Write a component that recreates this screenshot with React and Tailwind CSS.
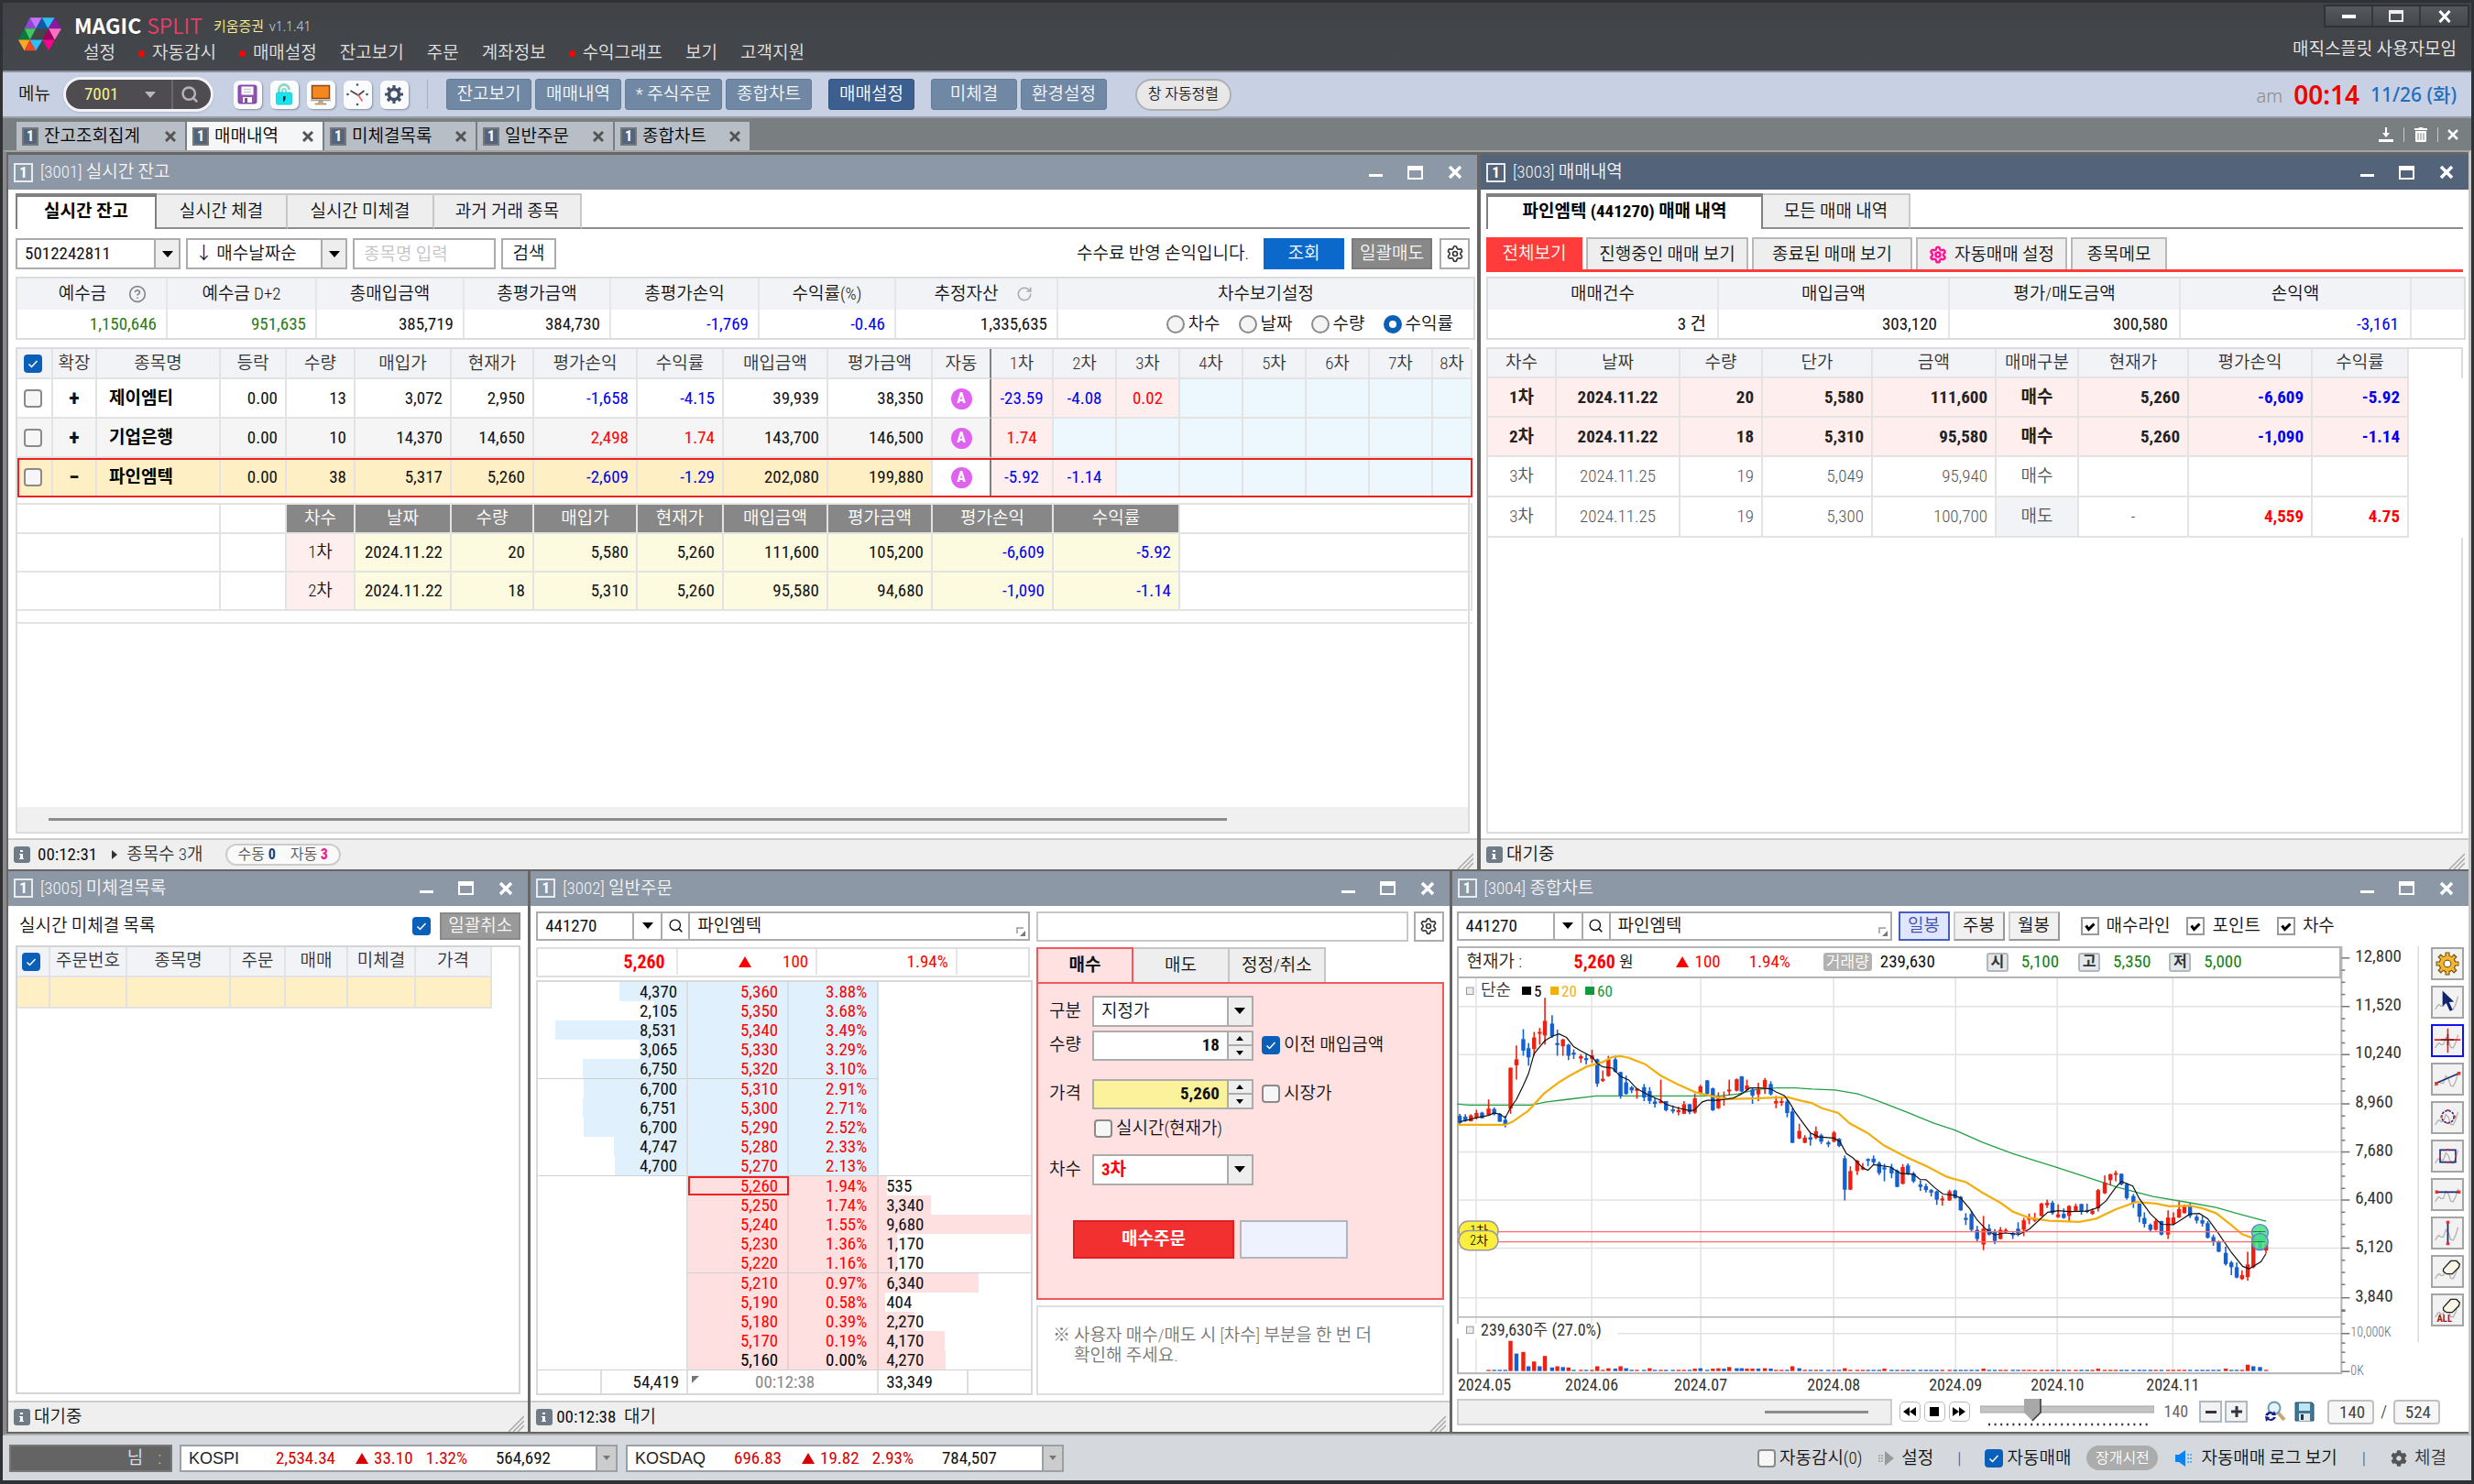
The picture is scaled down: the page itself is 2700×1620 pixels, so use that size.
import React from "react";
import { Settings, Search, RotateCw, CircleHelp } from "lucide-react";
import { FaCog, FaTrashAlt } from "react-icons/fa";

/* ---------- small shared parts ---------- */

function Check({ label, checked, className = "", title }) {
  return (
    <label className={"inline-flex items-center gap-1 whitespace-nowrap " + className}>
      <span className="grid">
        <input
          type="checkbox"
          defaultChecked={checked}
          aria-label={label ? undefined : title}
          className="peer col-start-1 row-start-1 size-5 appearance-none rounded-[4px] border-2 border-[#8a8a8a] bg-[#f6f6f6] checked:border-[#0a5fb8] checked:bg-[#0a5fb8]"
        />
        <svg viewBox="0 0 20 20" className="pointer-events-none col-start-1 row-start-1 hidden size-5 peer-checked:block">
          <path d="M5.5 10.5l3 3 6-6.5" fill="none" stroke="#fff" strokeWidth="1.5" />
        </svg>
      </span>
      {label}
    </label>
  );
}

function BoxCheck({ label }) {
  return (
    <label className="inline-flex items-center gap-2 whitespace-nowrap">
      <span className="grid">
        <input
          type="checkbox"
          defaultChecked
          className="peer col-start-1 row-start-1 size-5 appearance-none border-2 border-[#9a9a9a] bg-white"
        />
        <svg viewBox="0 0 20 20" className="pointer-events-none col-start-1 row-start-1 hidden size-5 peer-checked:block">
          <path d="M5.5 9.5l3 4 6-6" fill="none" stroke="#000" strokeWidth="3" />
        </svg>
      </span>
      {label}
    </label>
  );
}

function Select({ value, label, className = "", textClass = "" }) {
  return (
    <div className={"relative h-[34px] border-2 border-[#acacac] bg-white " + className}>
      <select aria-label={label} className={"h-full w-full appearance-none bg-transparent pr-8 pl-2 " + textClass}>
        <option>{value}</option>
      </select>
      <span className="pointer-events-none absolute inset-y-0 right-0 flex w-[27px] items-center justify-center border-l-2 border-[#acacac] bg-[#eee]">
        <svg viewBox="0 0 12 7" className="h-[7px] w-3"><path d="M0 0h12l-6 7z" fill="#000" /></svg>
      </span>
    </div>
  );
}

function WinButtons() {
  return (
    <div className="flex items-center gap-[27px] pr-4 text-white">
      <button aria-label="최소화" className="flex h-5 w-[15px] items-end pb-[5px]"><span className="block h-[3px] w-full bg-white" /></button>
      <button aria-label="최대화" className="h-[15px] w-[17px] border-2 border-t-[5px] border-white" />
      <button aria-label="닫기">
        <svg viewBox="0 0 16 16" className="size-4"><path d="M2 2l12 12M14 2L2 14" stroke="#fff" strokeWidth="3.5" /></svg>
      </button>
    </div>
  );
}

function Grip() {
  return (
    <svg viewBox="0 0 18 18" className="size-[18px] self-end">
      <path d="M1 18L18 1M6 18L18 6M11 18l7-7" stroke="#a8a8a8" strokeWidth="1.5" />
    </svg>
  );
}

function InfoIcon() {
  return (
    <span className="flex size-[18px] items-center justify-center rounded-[3px] bg-[#6f7c87]">
      <svg viewBox="0 0 6 12" className="h-3 w-1.5"><path d="M1 1h3v2H1zM0 5h4v5h1v1H0v-1h1V6H0z" fill="#fff" /></svg>
    </span>
  );
}

function Win({ code, name, active, status, children }) {
  return (
    <section className="flex min-w-0 flex-col bg-white">
      <header
        className={
          active
            ? "flex h-[38px] items-center justify-between bg-[#52637a] pl-[6px]"
            : "flex h-[38px] items-center justify-between bg-[#8d98a6] pl-[6px]"
        }
      >
        <h2 className="flex items-center gap-2 text-[#f4f6f8]">
          <span className="flex h-[21px] w-[21px] items-center justify-center border-2 border-[#e8ecf0] text-[17px] leading-none font-bold text-white">1</span>
          <span>[{code}] {name}</span>
        </h2>
        <WinButtons />
      </header>
      {children}
      {status && (
        <footer className="flex h-[34px] items-center justify-between border-t-2 border-[#ccc] bg-[#efefef] pr-1 pl-[6px]">
          <div className="flex items-center gap-1">
            <InfoIcon />
            {status}
          </div>
          <Grip />
        </footer>
      )}
    </section>
  );
}

function Cols({ widths }) {
  return (
    <colgroup>
      {widths.map((w, i) => (
        <col key={i} style={{ width: w }} />
      ))}
    </colgroup>
  );
}

const tone = (v) => (String(v).startsWith("-") ? "text-[#0000f0]" : "text-[#ff0000]");
const TH = "border-r-2 border-b-2 border-[#e3e3e6] bg-[#f2f3f7] p-0 font-[350] text-[#333] whitespace-nowrap overflow-hidden";
const TD = "border-r-2 border-b-2 border-[#e3e3e3] p-0 whitespace-nowrap overflow-hidden";

/* ---------- top bars ---------- */

function Logo() {
  const tri = [
    ["80,68 98,32 118,68", "#8f45d6"], ["98,32 138,32 118,68", "#c774fb"], ["118,68 138,32 158,68", "#0c5ba8"],
    ["138,32 180,32 158,68", "#2fc0f2"], ["158,68 180,32 202,68", "#8a18a6"], ["80,68 118,68 98,105", "#3fc85f"],
    ["60,105 80,68 98,105", "#08793f"], ["140,105 160,68 180,105", "#9f0060"], ["160,68 202,68 180,105", "#ff6fc6"],
    ["60,105 98,105 80,141", "#ffa922"], ["80,141 98,105 118,141", "#f04722"], ["98,105 140,105 118,141", "#2fc0fb"],
    ["140,105 180,105 160,141", "#ff0090"],
  ];
  return (
    <svg viewBox="60 32 142 110" className="h-[37px] w-[47px]" aria-hidden="true">
      {tri.map(([p, c]) => (<polygon key={p} points={p} fill={c} />))}
    </svg>
  );
}

const MENU = [
  ["설정"], ["자동감시", 1], ["매매설정", 1], ["잔고보기"], ["주문"], ["계좌정보"], ["수익그래프", 1], ["보기"], ["고객지원"],
];

function TopHeader() {
  return (
    <header className="flex h-[76px] justify-between border-b-2 border-[#8a909b] bg-gradient-to-b from-[#404246] to-[#44474b]">
      <div className="flex pl-[17px]">
        <div className="pt-4"><Logo /></div>
        <div className="pl-[14px]">
          <div className="flex h-[39px] items-center pt-2">
            <span className="font-['Noto_Sans_CJK_KR'] text-[23px] font-bold text-white">MAGIC</span>
            <span className="pl-[6px] font-['Noto_Sans_CJK_KR'] text-[23px] text-[#e83e6b]">SPLIT</span>
            <span className="pt-1 pl-3 text-[15px] text-[#f5f58c]">키움증권</span>
            <span className="pt-1 pl-1.5 font-['Noto_Sans'] text-[14px] text-[#c8d8d8]">v1.1.41</span>
          </div>
          <nav className="flex items-center gap-[25px] pl-[10px] text-[#e2e2e2]">
            {MENU.map(([t, dot]) => (
              <a key={t} href="#" className="flex items-center gap-2 leading-8 whitespace-nowrap">
                {dot && <span className="size-[7px] rounded-full bg-[#ff0000]" />}
                {t}
              </a>
            ))}
          </nav>
        </div>
      </div>
      <div className="flex flex-col items-end">
        <div className="mt-0.5 mr-0.5 flex h-[30px] border-2 border-[#303236] bg-gradient-to-b from-[#55595e] to-[#44474c]">
          <button aria-label="창 최소화" className="flex w-[52px] items-end justify-center border-r-2 border-[#36383c] pb-2"><span className="h-[4px] w-[15px] bg-white" /></button>
          <button aria-label="창 최대화" className="flex w-[52px] items-center justify-center border-r-2 border-[#36383c]"><span className="h-[13px] w-4 border-2 border-t-4 border-[#eee]" /></button>
          <button aria-label="창 닫기" className="flex w-[51px] items-center justify-center"><svg viewBox="0 0 14 14" className="size-[14px]"><path d="M1.5 1l11 12M12.5 1l-11 12" stroke="#fff" strokeWidth="3" /></svg></button>
        </div>
        <a href="#" className="pr-4 leading-[47px] text-[#ececec]">매직스플릿 사용자모임</a>
      </div>
    </header>
  );
}

const IB = "flex h-[31px] w-[31px] items-center justify-center rounded-md bg-[#fafbfd] shadow-[1px_1px_2px_#8890a0]";

function ToolIcons() {
  return (
    <div className="flex gap-[9px]">
      <button aria-label="저장" className={IB}>
        <svg viewBox="0 0 22 22" className="size-[22px]">
          <rect x="1.5" y="1.5" width="19" height="19" rx="2" fill="#9254b4" stroke="#8a48ac" strokeWidth="2" />
          <rect x="4.500" y="2.500" width="13" height="9" fill="#fff" />
          <path d="M7 5.500h8M7 8.500h8" stroke="#c9c9c9" strokeWidth="1.500" />
          <rect x="6" y="14" width="10" height="6" fill="#fff" /><rect x="8" y="15" width="3" height="5" fill="#8a48ac" />
        </svg>
      </button>
      <button aria-label="잠금" className={IB}>
        <svg viewBox="0 0 22 24" className="h-6 w-[22px]">
          <path d="M5.500 11V7a5.500 5.500 0 0 1 11 0" fill="none" stroke="#8fd9c8" strokeWidth="3" />
          <path d="M9 11V8a2 2 0 0 1 4 0v2" fill="none" stroke="#8fd9c8" strokeWidth="2" />
          <rect x="2.500" y="10" width="17" height="13" rx="1.500" fill="#13e6f0" stroke="#32c8d4" />
          <path d="M10 14h2.500v3l-1.500 3h-1z" fill="#123" />
        </svg>
      </button>
      <button aria-label="화면" className={IB}>
        <svg viewBox="0 0 24 24" className="size-6">
          <rect x="2.500" y="2.500" width="19" height="14" fill="#f5871f" stroke="#8a4a1c" strokeWidth="1.500" />
          <path d="M1 18.500h22" stroke="#a9a39a" strokeWidth="1.500" /><path d="M10 19h4v3h4v1H6v-1h4z" fill="#c9b08a" stroke="#9a7a50" strokeWidth=".6" />
        </svg>
      </button>
      <button aria-label="시계" className={IB}>
        <svg viewBox="0 0 26 26" className="size-[26px]">
          <path d="M5.500 9l8.500 5 6.500-5" fill="none" stroke="#444" strokeWidth="1.600" /><path d="M13.500 13l5 7.500" stroke="#f05a5a" strokeWidth="1.500" />
          <g fill="#4a5060"><circle cx="13" cy="2.500" r="1.300" /><circle cx="13" cy="24" r="1.300" /><circle cx="2.500" cy="13" r="1.300" /><circle cx="23.500" cy="13" r="1.300" /></g>
        </svg>
      </button>
      <button aria-label="설정" className={IB}>
        <svg viewBox="0 0 20 20" className="size-5">
          <circle cx="10" cy="10" r="5.500" fill="none" stroke="#44506a" strokeWidth="3.500" />
          <path d="M10 0v4M10 16v4M0 10h4M16 10h4M3 3l3 3M14 14l3 3M17 3l-3 3M6 14l-3 3" stroke="#44506a" strokeWidth="3.200" />
        </svg>
      </button>
    </div>
  );
}

const QB = "h-[34px] rounded-[3px] border border-[#627c98] bg-[#7088a4] text-[#f6f8fa] whitespace-nowrap";

function Toolbar() {
  return (
    <div className="flex h-12 items-center justify-between bg-[#c8d0e3] pr-[16px] pl-[17px]">
      <div className="flex items-center">
        <label htmlFor="screen" className="text-[#111]">메뉴</label>
        <div className="ml-[14px] flex h-[38px] w-[164px] items-center rounded-full border-[3px] border-[#f2f3f6] bg-[#4f4c51] shadow-sm">
          <input id="screen" defaultValue="7001" className="w-[86px] bg-transparent pl-[20px] font-normal text-[#f4f08a]" />
          <svg viewBox="0 0 12 7" className="h-[7px] w-3"><path d="M0 0h12l-6 7z" fill="#b8b8b8" /></svg>
          <button aria-label="찾기" className="ml-[17px] flex h-full items-center border-l-2 border-[#6a686c] pl-[8px]"><Search className="size-5 text-[#b4b4b4]" strokeWidth={3} /></button>
        </div>
        <div className="ml-[22px]"><ToolIcons /></div>
        <span className="mx-5 h-8 w-px bg-[#a4b0c8]" />
        <div className="flex gap-1">
          <button className={QB + " w-[93px]"}>잔고보기</button>
          <button className={QB + " w-[94px]"}>매매내역</button>
          <button className={QB + " w-[106px]"}>* 주식주문</button>
          <button className={QB + " w-[94px]"}>종합차트</button>
        </div>
        <button className="ml-[18px] h-[34px] w-[94px] rounded-[3px] border border-[#34557f] bg-[#3c5f90] text-white">매매설정</button>
        <div className="ml-[18px] flex gap-1">
          <button className={QB + " w-[94px]"}>미체결</button>
          <button className={QB + " w-[94px]"}>환경설정</button>
        </div>
        <button className="ml-[31px] h-[35px] w-[105px] rounded-full border-2 border-[#b0b0b0] bg-[#e8e8e8] text-[16px] text-[#222]">창 자동정렬</button>
      </div>
      <div className="flex items-center font-['Noto_Sans','Noto_Sans_CJK_KR',sans-serif]">
        <span className="pt-1 text-[20px] text-[#8c8c8c]">am</span>
        <span className="px-[12px] text-[28px] font-semibold text-[#f00000]">00:14</span>
        <span className="text-[21px] font-medium text-[#1f6fc0]">11/26 (화)</span>
      </div>
    </div>
  );
}

function PageTabs() {
  const tabs = [["잔고조회집계", "w-[184px]"], ["매매내역", "w-[148px]", 1], ["미체결목록", "w-[165px]"], ["일반주문", "w-[148px]"], ["종합차트", "w-[147px]"]];
  return (
    <div className="flex h-[37px] items-end justify-between border-t-2 border-[#9aa0a8] bg-[#797e80] pl-[15px]">
      <div className="flex gap-0.5">
        {tabs.map(([t, w, on]) => (
          <div key={t} className={"flex h-[31px] items-center pr-2.5 pl-[6px] " + w + (on ? " bg-[#f5f6f8]" : " bg-[#b8bec5]")}>
            <span className="flex h-[20px] w-[18px] items-center justify-center border-2 border-[#777] bg-[#52657d] text-[16px] leading-none font-bold text-white">1</span>
            <a href="#" className="flex-1 pl-[6px] whitespace-nowrap text-black">{t}</a>
            <button aria-label={t + " 닫기"}><svg viewBox="0 0 12 12" className="size-3"><path d="M1 1l10 10M11 1L1 11" stroke="#555" strokeWidth="3" /></svg></button>
          </div>
        ))}
      </div>
      <div className="flex h-full items-center gap-[10px] pr-[14px] text-white">
        <button aria-label="내리기"><svg viewBox="0 0 18 18" className="size-[18px]"><path d="M8 1h2v6h3l-4 5-4-5h3zM1 14h16v3H1z" fill="#fff" /></svg></button>
        <span className="h-4 w-px bg-[#c8c8c8]" />
        <button aria-label="비우기"><FaTrashAlt className="size-4" /></button>
        <span className="h-4 w-px bg-[#c8c8c8]" />
        <button aria-label="닫기"><svg viewBox="0 0 12 12" className="size-3"><path d="M1 1l10 10M11 1L1 11" stroke="#fff" strokeWidth="2.5" /></svg></button>
      </div>
    </div>
  );
}

/* ---------- [3001] balance ---------- */

const T_ON = "h-[39px] border-t-[4px] border-x-2 border-[#808080] bg-white pb-1 font-bold text-black whitespace-nowrap";
const T_OFF = "h-[39px] border-t-2 border-r-2 border-b-2 border-t-[#c8c8c8] border-r-[#c8c8c8] border-b-[#8e8e8e] bg-[#eee] text-[#111] whitespace-nowrap";

const SUM = [
  ["예수금", "1,150,646", "text-[#2a7a1a]"], ["예수금 D+2", "951,635", "text-[#2a7a1a]"], ["총매입금액", "385,719", ""],
  ["총평가금액", "384,730", ""], ["총평가손익", "-1,769", "text-[#0000f0]"], ["수익률(%)", "-0.46", "text-[#0000f0]"], ["추정자산", "1,335,635", ""],
];

const MAIN_W = [39, 48, 135, 72, 75, 105, 90, 113, 94, 114, 114, 64, 68, 69, 69, 69, 69, 69, 69, 43];
const MAIN_H = ["확장", "종목명", "등락", "수량", "매입가", "현재가", "평가손익", "수익률", "매입금액", "평가금액", "자동", "1차", "2차", "3차", "4차", "5차", "6차", "7차", "8차"];
const MAIN_R = [
  { e: "+", n: "제이엠티", v: ["0.00", "13", "3,072", "2,950", "-1,658", "-4.15", "39,939", "38,350"], c: ["-23.59", "-4.08", "0.02"], bg: "bg-white" },
  { e: "+", n: "기업은행", v: ["0.00", "10", "14,370", "14,650", "2,498", "1.74", "143,700", "146,500"], c: ["1.74"], bg: "bg-[#f5f5f5]" },
  { e: "−", n: "파인엠텍", v: ["0.00", "38", "5,317", "5,260", "-2,609", "-1.29", "202,080", "199,880"], c: ["-5.92", "-1.14"], bg: "bg-[#ffefc4]", sel: 1 },
];
const SUB_H = ["차수", "날짜", "수량", "매입가", "현재가", "매입금액", "평가금액"];
const SUB_R = [
  ["1차", "2024.11.22", "20", "5,580", "5,260", "111,600", "105,200", "-6,609", "-5.92"],
  ["2차", "2024.11.22", "18", "5,310", "5,260", "95,580", "94,680", "-1,090", "-1.14"],
];

function BalanceTable() {
  const SH = "h-[32px] border-r-2 border-b-2 border-[#e3e3e3] bg-[#878787] p-0 font-[350] text-white";
  const SY = TD + " h-[42px] bg-[#fcfbe0] pr-2 text-right font-normal";
  return (
    <table className="w-full table-fixed border-separate border-spacing-0">
      <Cols widths={MAIN_W} />
      <thead>
        <tr className="h-[33px]">
          <th className={TH + " pr-1"}><Check checked title="전체 선택" className="align-middle" /></th>
          {MAIN_H.map((h) => (
            <th key={h} className={TH + (h === "자동" ? " !border-r-[#808080]" : "")}>{h}</th>
          ))}
        </tr>
      </thead>
      <tbody>
        {MAIN_R.map((r) => (
          <tr key={r.n} className={"h-[43px] " + r.bg + (r.sel ? " outline-2 -outline-offset-2 outline-[#f02020]" : "")}>
            <td className={TD + " pr-1 text-center"}><Check title={r.n} className="align-middle" /></td>
            <td className={TD + " text-center text-[24px] leading-none font-bold"}>{r.e}</td>
            <td className={TD + " pl-[13px] font-bold text-black"}>{r.n}</td>
            {r.v.map((v, i) => (
              <td key={i} className={TD + " pr-2 text-right font-normal " + (i === 4 || i === 5 ? tone(v) : "text-[#111]")}>{v}</td>
            ))}
            <td className={TD + " !border-r-[#808080] text-center " + (r.sel ? "bg-white" : "")}>
              <span className="inline-flex size-[23px] items-center justify-center rounded-full bg-[#df63f0] align-middle text-[16px] leading-none font-bold text-white">A</span>
            </td>
            {[0, 1, 2, 3, 4, 5, 6, 7].map((i) => (
              <td key={i} className={TD + " text-center font-normal " + (r.c[i] ? "bg-[#ffeeee] " + tone(r.c[i]) : "bg-[#edf7fe]")}>{r.c[i]}</td>
            ))}
          </tr>
        ))}
        <tr className="h-[8px]"><td colSpan={20} className="border-b-2 border-[#e3e3e3] p-0" /></tr>
        <tr>
          <td colSpan={3} className={TD} />
          <td className={TD} />
          {SUB_H.map((h) => (<th key={h} className={SH}>{h}</th>))}
          <th colSpan={2} className={SH}>평가손익</th>
          <th colSpan={2} className={SH}>수익률</th>
          <td colSpan={5} className={TD} />
        </tr>
        {SUB_R.map((r) => (
          <tr key={r[0]}>
            <td colSpan={3} className={TD} />
            <td className={TD} />
            <td className={TD + " bg-[#ffeeee] text-center"}>{r[0]}</td>
            {r.slice(1, 7).map((v, i) => (<td key={i} className={SY}>{v}</td>))}
            <td colSpan={2} className={SY + " text-[#0000f0]"}>{r[7]}</td>
            <td colSpan={2} className={SY + " text-[#0000f0]"}>{r[8]}</td>
            <td colSpan={5} className={TD} />
          </tr>
        ))}
        <tr className="h-[14px]"><td colSpan={20} className="border-b-2 border-[#e3e3e3] p-0" /></tr>
      </tbody>
    </table>
  );
}

function BalanceWindow() {
  return (
    <Win
      code="3001"
      name="실시간 잔고"
      status={
        <>
          <span className="pl-1 font-normal">00:12:31</span>
          <svg viewBox="0 0 6 10" className="mr-1.5 ml-3 h-2.5 w-1.5"><path d="M0 0l6 5-6 5z" fill="#333" /></svg>
          <span className="text-[#333]">종목수 3개</span>
          <span className="ml-5 flex h-6 items-center gap-4 rounded-full border-2 border-[#ccc] bg-[#fafafa] px-3 text-[16px] text-[#555]">
            <span>수동 <b className="text-[#1c3f6e]">0</b></span>
            <span>자동 <b className="text-[#f0148c]">3</b></span>
          </span>
        </>
      }
    >
      <div className="flex flex-1 flex-col px-2 pt-1 pb-[5px]">
        <div className="flex">
          <button className={T_ON + " w-[154px]"}>실시간 잔고</button>
          <button className={T_OFF + " w-[143px]"}>실시간 체결</button>
          <button className={T_OFF + " w-[160px]"}>실시간 미체결</button>
          <button className={T_OFF + " w-[161px]"}>과거 거래 종목</button>
          <span className="flex-1 border-b-2 border-[#8e8e8e]" />
        </div>
        <div className="mt-[10px] flex items-center justify-between">
          <div className="flex gap-[6px]">
            <Select value="5012242811" label="계좌번호" className="w-[180px]" textClass="font-normal" />
            <Select value="↓ 매수날짜순" label="정렬" className="w-[176px]" />
            <input aria-label="종목명" placeholder="종목명 입력" className="h-[34px] w-[156px] border-2 border-[#acacac] px-2.5 placeholder:text-[#c4c4c4]" />
            <button className="h-[34px] w-[60px] border-2 border-[#acacac] bg-white">검색</button>
          </div>
          <div className="flex items-center gap-2">
            <span className="pr-2">수수료 반영 손익입니다.</span>
            <button className="h-[34px] w-[88px] bg-[#0c69cc] text-white">조회</button>
            <button className="h-[34px] w-[88px] border-2 border-[#7a7a7a] bg-[#888] text-[#f8f8f8]">일괄매도</button>
            <button aria-label="잔고 설정" className="flex h-[34px] w-[33px] items-center justify-center border-2 border-[#acacac]"><Settings className="size-5 text-[#333]" /></button>
          </div>
        </div>
        <table className="mt-[8px] w-full table-fixed border-separate border-spacing-0 border-2 border-[#dcdcdc]">
          <Cols widths={[164, 163, 161, 160, 162, 149, 177, 453]} />
          <thead>
            <tr className="h-[34px]">
              {SUM.map(([h]) => (
                <th key={h} className="border-r-2 border-[#e6e6ea] bg-[#f2f3f7] p-0 font-[350] whitespace-nowrap">
                  <span className="inline-flex items-center">
                    {h}
                    {h === "예수금" && <CircleHelp className="-mr-6 ml-6 size-5 text-[#888]" />}
                    {h === "추정자산" && <RotateCw className="-mr-4 ml-5 size-[18px] text-[#aaa]" />}
                  </span>
                </th>
              ))}
              <th className="bg-[#f2f3f7] p-0 font-[350]">차수보기설정</th>
            </tr>
          </thead>
          <tbody>
            <tr className="h-[31px]">
              {SUM.map(([h, v, c]) => (<td key={h} className={"border-r-2 border-[#e6e6ea] p-0 pr-2.5 text-right font-normal " + c}>{v}</td>))}
              <td className="p-0">
                <div className="flex justify-end gap-5 pr-[22px]">
                  {["차수", "날짜", "수량", "수익률"].map((t) => (
                    <label key={t} className="flex items-center gap-1">
                      <input type="radio" name="view" defaultChecked={t === "수익률"} className="size-5 appearance-none rounded-full border-2 border-[#8a8a8a] bg-[#f4f4f4] checked:border-[6px] checked:border-[#0a5fb8] checked:bg-white" />
                      {t}
                    </label>
                  ))}
                </div>
              </td>
            </tr>
          </tbody>
        </table>
        <div className="mt-[8px] flex flex-1 flex-col border-2 border-[#dcdcdc]">
          <BalanceTable />
          <div className="mt-auto flex h-[27px] items-center bg-[#f0f0f0] pl-[34px]"><span className="h-[3px] w-[83%] bg-[#8c8c8c]" /></div>
        </div>
      </div>
    </Win>
  );
}

/* ---------- [3003] trade history ---------- */

const HIS_W = [75, 135, 90, 120, 135, 90, 120, 135, 105, 59];
const HIS_H = ["차수", "날짜", "수량", "단가", "금액", "매매구분", "현재가", "평가손익", "수익률"];
const HIS_R = [
  ["1차", "2024.11.22", "20", "5,580", "111,600", "매수", "5,260", "-6,609", "-5.92"],
  ["2차", "2024.11.22", "18", "5,310", "95,580", "매수", "5,260", "-1,090", "-1.14"],
  ["3차", "2024.11.25", "19", "5,049", "95,940", "매수", "", "", ""],
  ["3차", "2024.11.25", "19", "5,300", "100,700", "매도", "-", "4,559", "4.75"],
];

function HistoryWindow() {
  const HB = "h-[35px] border-2 border-b-0 border-[#b8b8b8] bg-[#eee] text-[#111] whitespace-nowrap";
  return (
    <Win code="3003" name="매매내역" active status={<span>대기중</span>}>
      <div className="flex flex-1 flex-col px-[6px] pt-1 pb-[5px]">
        <div className="flex">
          <button className={T_ON + " w-[302px]"}>파인엠텍 (441270) 매매 내역</button>
          <button className={T_OFF + " w-[161px]"}>모든 매매 내역</button>
          <span className="flex-1 border-b-2 border-[#8e8e8e]" />
        </div>
        <div className="mt-[9px] flex gap-1 border-b-[3px] border-[#ff3b3b]">
          <button className="h-[35px] w-[105px] bg-[#ff3b3b] text-white">전체보기</button>
          <button className={HB + " w-[177px]"}>진행중인 매매 보기</button>
          <button className={HB + " w-[175px]"}>종료된 매매 보기</button>
          <button className={HB + " flex w-[165px] items-center justify-center gap-2"}><Settings className="size-5 text-[#ff1493]" strokeWidth={3} />자동매매 설정</button>
          <button className={HB + " w-[105px]"}>종목메모</button>
        </div>
        <table className="mt-[5px] w-full table-fixed border-separate border-spacing-0 border-2 border-[#dcdcdc]">
          <Cols widths={[252, 252, 252, 252, 57]} />
          <thead>
            <tr className="h-[34px]">
              {["매매건수", "매입금액", "평가/매도금액", "손익액", ""].map((h) => (<th key={h} className="border-r-2 border-[#e6e6ea] bg-[#f2f3f7] p-0 font-[350] last:border-r-0">{h}</th>))}
            </tr>
          </thead>
          <tbody>
            <tr className="h-[31px]">
              {["3 건", "303,120", "300,580", "-3,161", ""].map((v) => (<td key={v} className={"border-r-2 border-[#e6e6ea] p-0 pr-3 text-right font-normal last:border-r-0 " + (v[0] === "-" ? "text-[#0000f0]" : "")}>{v}</td>))}
            </tr>
          </tbody>
        </table>
        <div className="mt-[8px] flex-1 border-2 border-[#dcdcdc]">
          <table className="w-full table-fixed border-separate border-spacing-0">
            <Cols widths={HIS_W} />
            <thead>
              <tr className="h-[32px]">
                {HIS_H.map((h) => (<th key={h} className={TH}>{h}</th>))}
                <td />
              </tr>
            </thead>
            <tbody>
              {HIS_R.map((r, k) => (
                <tr key={k} className={k < 2 ? "h-[43px] bg-[#ffeeee] font-bold text-[#222]" : "h-[44px] font-[350] text-[#555]"}>
                  {r.map((v, i) => {
                    const mid = i < 2 || i === 5 || v === "-";
                    return (
                      <td key={i} className={TD + (mid ? " text-center" : " pr-2 text-right") + (i > 6 ? " font-bold " + tone(v) : "") + (v === "매도" ? " bg-[#f2f3f7]" : "")}>{v}</td>
                    );
                  })}
                  <td className="bg-white" />
                </tr>
              ))}
            </tbody>
          </table>
        </div>
      </div>
    </Win>
  );
}

/* ---------- [3005] open orders ---------- */

function OpenOrdersWindow() {
  return (
    <Win code="3005" name="미체결목록" status={<span>대기중</span>}>
      <div className="flex flex-1 flex-col px-2 pt-[7px] pb-[7px]">
        <div className="flex items-center justify-between pl-1">
          <span>실시간 미체결 목록</span>
          <div className="flex items-center gap-[10px]">
            <Check checked title="실시간" />
            <button className="h-[30px] w-[88px] border-2 border-[#8a8a8a] bg-[#9a9a9a] text-[#f8f8f8]">일괄취소</button>
          </div>
        </div>
        <div className="mt-[6px] flex-1 border-2 border-[#d4d4d4]">
          <table className="w-full table-fixed border-separate border-spacing-0">
            <Cols widths={[36, 84, 113, 60, 68, 74, 83, 33]} />
            <thead>
              <tr className="h-[33px]">
                <th className={TH + " pr-1"}><Check checked title="전체 선택" className="align-middle" /></th>
                {["주문번호", "종목명", "주문", "매매", "미체결", "가격"].map((h) => (<th key={h} className={TH}>{h}</th>))}
                <td />
              </tr>
            </thead>
            <tbody>
              <tr className="h-[34px]">
                {[0, 1, 2, 3, 4, 5, 6].map((i) => (<td key={i} className={TD + " bg-[#ffefc4]"} />))}
                <td />
              </tr>
            </tbody>
          </table>
        </div>
      </div>
    </Win>
  );
}

/* ---------- [3002] order ---------- */

function SymbolBox({ box = "" }) {
  return (
    <div className={"flex h-[32px] border-2 border-[#acacac] bg-white " + box}>
      <input aria-label="종목코드" defaultValue="441270" className="w-[103px] min-w-0 px-2 font-normal" />
      <button aria-label="종목 목록" className="flex w-[31px] items-center justify-center border-l-2 border-[#acacac]"><svg viewBox="0 0 12 7" className="h-[7px] w-3"><path d="M0 0h12l-6 7z" fill="#000" /></svg></button>
      <button aria-label="종목 찾기" className="flex w-[32px] items-center justify-center border-x-2 border-[#acacac]"><Search className="size-[17px]" /></button>
      <span className="flex flex-1 items-center justify-between pr-[3px] pl-2">
        파인엠텍
        <svg viewBox="0 0 10 10" className="mb-[3px] size-2.5 self-end"><path d="M1 7V1h7" fill="none" stroke="#999" strokeWidth="1.5" /><path d="M10 4v6H4z" fill="#777" /></svg>
      </span>
    </div>
  );
}

const ASKS = [
  ["4,370", "5,360", "3.88%"], ["2,105", "5,350", "3.68%"], ["8,531", "5,340", "3.49%"], ["3,065", "5,330", "3.29%"], ["6,750", "5,320", "3.10%"],
  ["6,700", "5,310", "2.91%"], ["6,751", "5,300", "2.71%"], ["6,700", "5,290", "2.52%"], ["4,747", "5,280", "2.33%"], ["4,700", "5,270", "2.13%"],
];
const BIDS = [
  ["535", "5,260", "1.94%"], ["3,340", "5,250", "1.74%"], ["9,680", "5,240", "1.55%"], ["1,170", "5,230", "1.36%"], ["1,170", "5,220", "1.16%"],
  ["6,340", "5,210", "0.97%"], ["404", "5,190", "0.58%"], ["2,270", "5,180", "0.39%"], ["4,170", "5,170", "0.19%"], ["4,270", "5,160", "0.00%"],
];
const share = (q) => (Number(q.replace(",", "")) / 9680) * 100 + "%";

function OrderBook() {
  const line = (i) => (i % 5 === 4 ? " border-b border-b-[#d0d0d0]" : "");
  const h = (i) => (i % 5 === 4 ? " h-[22px]" : " h-[21px]");
  return (
    <table className="mt-[3px] w-full table-fixed border-separate border-spacing-0 border-2 border-[#d8d8d8] leading-[21px] font-normal">
      <Cols widths={[70, 94, 110, 98, 98, 68]} />
      <tbody>
        {ASKS.map(([q, p, r], i) => (
          <tr key={p}>
            <td colSpan={2} className={"border-r-2 border-[#dedede] p-0" + h(i) + line(i)}>
              <div className="grid h-5 grid-cols-1">
                <span className="col-start-1 row-start-1 justify-self-end bg-[#e0f1fd]" style={{ width: share(q) }} />
                <span className="col-start-1 row-start-1 pr-[10px] text-right">{q}</span>
              </div>
            </td>
            <td className={"border-r-2 border-[#d4e0e8] bg-[#e0f1fd] p-0 pr-[10px] text-right text-[#ff0000]" + line(i)}>{p}</td>
            <td className={"border-r-2 border-[#d4e0e8] bg-[#e0f1fd] p-0 pr-[11px] text-right text-[#ff0000]" + line(i)}>{r}</td>
            <td colSpan={2} className={"p-0" + (i === 9 ? line(i) : "")} />
          </tr>
        ))}
        {BIDS.map(([q, p, r], i) => (
          <tr key={p}>
            <td colSpan={2} className={"border-r-2 border-[#dedede] p-0" + h(i) + (i === 9 ? line(i) : "")} />
            <td className={"border-r-2 border-[#ecd0d0] bg-[#ffe0e0] p-0 pr-[10px] text-right" + (i === 9 ? " text-black" : " text-[#ff0000]") + (i === 0 ? " outline-2 -outline-offset-2 outline-[#f02020]" : "") + line(i)}>{p}</td>
            <td className={"border-r-2 border-[#ecd0d0] bg-[#ffe0e0] p-0 pr-[11px] text-right" + (i === 9 ? " text-black" : " text-[#ff0000]") + line(i)}>{r}</td>
            <td colSpan={2} className={"p-0" + line(i)}>
              <div className="grid h-5 grid-cols-1">
                <span className="col-start-1 row-start-1 bg-[#ffe0e0]" style={{ width: share(q) }} />
                <span className="col-start-1 row-start-1 pl-2">{q}</span>
              </div>
            </td>
          </tr>
        ))}
        <tr className="h-[25px]">
          <td className="border-r-2 border-[#dedede] p-0" />
          <td className="border-r-2 border-[#dedede] p-0 pr-2 text-right">54,419</td>
          <td colSpan={2} className="border-r-2 border-[#dedede] p-0">
            <div className="flex justify-between pr-[68px] pl-1 text-[#888]">
              <svg viewBox="0 0 8 8" className="mt-1 size-2"><path d="M0 0h8L0 8z" fill="#777" /></svg>
              00:12:38
            </div>
          </td>
          <td className="border-r-2 border-[#dedede] p-0 pl-2">33,349</td>
          <td className="p-0" />
        </tr>
      </tbody>
    </table>
  );
}

function Spin({ value, label, field = "bg-white" }) {
  return (
    <div className="flex h-[33px] w-[176px] border-2 border-[#acacac]">
      <input aria-label={label} defaultValue={value} className={"w-full min-w-0 flex-1 pr-2 text-right font-bold " + field} />
      <span className="flex w-[27px] flex-col border-l-2 border-[#acacac] bg-[#eee]">
        <button type="button" aria-label={label + " 증가"} className="flex flex-1 items-center justify-center border-b-2 border-[#acacac]"><svg viewBox="0 0 8 5" className="h-[5px] w-2"><path d="M0 5h8L4 0z" /></svg></button>
        <button type="button" aria-label={label + " 감소"} className="flex flex-1 items-center justify-center"><svg viewBox="0 0 8 5" className="h-[5px] w-2"><path d="M0 0h8L4 5z" /></svg></button>
      </span>
    </div>
  );
}

function OrderForm() {
  const OFF = "h-[38px] w-[105px] border-t-2 border-r-2 border-[#c6c6c6] bg-[#eee]";
  const ROW = "flex items-center gap-[9px]";
  const LAB = "w-[38px]";
  return (
    <div className="flex min-w-0 flex-1 flex-col">
      <div className="flex gap-[6px]">
        <input aria-label="메시지" className="h-[33px] min-w-0 flex-1 border-2 border-[#c8c8c8] px-2" />
        <button aria-label="주문 설정" className="flex h-[33px] w-[33px] items-center justify-center border-2 border-[#acacac]"><Settings className="size-5 text-[#333]" /></button>
      </div>
      <div className="mt-[6px] flex">
        <button className="h-[38px] w-[106px] border-2 border-b-0 border-[#f05a5a] bg-[#ffe1e1] font-bold">매수</button>
        <button className={OFF}>매도</button>
        <button className={OFF}>정정/취소</button>
      </div>
      <form className="flex flex-col border-2 border-[#f05a5a] bg-[#ffe1e1] px-3 pt-[13px] pb-[43px]">
        <div className={ROW}><span className={LAB}>구분</span><Select value="지정가" label="구분" className="w-[176px]" /></div>
        <div className={ROW + " mt-1"}><span className={LAB}>수량</span><Spin value="18" label="수량" /><Check checked label="이전 매입금액" /></div>
        <div className={ROW + " mt-[20px]"}><span className={LAB}>가격</span><Spin value="5,260" label="가격" field="bg-[#fdf29c]" /><Check label="시장가" /></div>
        <Check label="실시간(현재가)" className="mt-[9px] ml-[49px]" />
        <div className={ROW + " mt-[16px]"}><span className={LAB}>차수</span><Select value="3차" label="차수" className="w-[176px]" textClass="font-bold text-[#ff0000]" /></div>
        <div className="mt-[38px] flex gap-[6px] pl-[26px]">
          <button type="button" className="h-[42px] w-[176px] border-2 border-[#e02020] bg-[#f23030] font-bold text-white">매수주문</button>
          <button type="button" aria-label="예비" className="h-[42px] w-[118px] border-2 border-[#b4b4bc] bg-[#eef2ff]" />
        </div>
      </form>
      <div className="mt-[6px] flex flex-1 gap-1 border-2 border-[#dedede] px-4 pt-[20px] leading-[22px] text-[#777]">
        <span>※</span>
        <p>사용자 매수/매도 시 [차수] 부분을 한 번 더<br />확인해 주세요.</p>
      </div>
    </div>
  );
}

function OrderWindow() {
  return (
    <Win code="3002" name="일반주문" status={<span className="font-normal">00:12:38&nbsp; <span className="font-[350]">대기</span></span>}>
      <div className="flex flex-1 gap-[7px] px-[6px] pt-[6px] pb-[6px]">
        <div className="w-[54.4%] shrink-0">
          <SymbolBox />
          <div className="mt-[7px] grid h-[33px] grid-cols-[154fr_154fr_154fr_78fr] items-center border-2 border-[#dedede] font-normal text-[#ff0000]">
            <b className="border-r-2 border-[#e6e6e6] pr-3 text-right text-[20px] leading-7">5,260</b>
            <span className="flex items-center justify-between border-r-2 border-[#e6e6e6] pr-2 pl-[66px] leading-7"><svg viewBox="0 0 14 12" className="h-3 w-3.5"><path d="M7 0l7 12H0z" fill="#ff0000" /></svg>100</span>
            <span className="border-r-2 border-[#e6e6e6] pr-2 text-right leading-7">1.94%</span>
            <span />
          </div>
          <OrderBook />
        </div>
        <OrderForm />
      </div>
    </Win>
  );
}

/* ---------- [3004] chart ---------- */

const R = 1;
const B = 0;
const C1 = [
  [34,636,641,659,662,B],[51,637,643,654,656,B],[68,637,640,655,655,R],[85,626,634,645,650,R],[102,631,633,647,648,B],[122,600,623,639,640,R],
  [139,620,624,637,640,B],[156,634,636,656,656,B],[173,641,651,664,670,B],[189,520,520,623,636,R],[207,464,499,514,550,R],[228,423,448,477,490,B],
  [244,458,471,494,515,B],[261,430,444,473,490,R],[278,420,430,434,462,R],[294,344,402,439,462,R],[316,388,409,441,445,B],[332,424,458,463,490,B],
  [349,447,449,466,490,R],[366,460,462,490,501,B],[382,474,482,487,498,B],[404,486,491,497,508,R],[420,486,496,501,512,B],[438,475,489,498,508,R],
  [454,497,499,560,568,B],[471,527,548,553,556,R],[488,490,499,541,543,R],[509,490,499,530,532,B],[525,530,531,591,598,B],[542,540,557,586,588,B],
  [559,566,569,577,584,B],[575,571,573,578,598,R],[597,561,569,595,604,B],[614,569,579,604,611,B],[630,596,605,611,620,B],[648,550,604,609,610,R],
  [664,604,604,627,630,B],[685,615,625,630,635,B],[702,618,627,632,640,R],[719,604,612,636,637,R],[736,611,612,632,637,B],[752,585,597,633,636,R],
  [769,563,567,584,588,R],[790,551,552,586,590,B],[807,570,572,627,629,B],[824,582,597,622,624,R],[841,580,594,600,616,R],[857,550,575,579,590,R],
  [880,547,549,578,580,R],[895,541,542,580,582,B],[911,550,565,575,580,R],[928,572,575,590,611,B],[946,558,575,587,604,R],[966,546,551,570,586,R],
  [984,554,561,587,590,B],[1000,591,604,610,622,R],[1017,593,604,608,616,R],[1034,599,605,634,645,B],[1050,622,630,709,710,B],[1071,661,679,698,700,R],
  [1088,690,696,709,710,R],[1105,684,695,701,716,B],[1122,668,680,697,700,R],[1138,686,690,706,712,B],[1160,704,708,713,720,B],[1177,679,683,706,708,R],
  [1193,697,699,717,720,B],[1210,741,748,827,854,B],[1227,768,780,827,828,R],[1248,752,754,780,790,R],[1265,760,771,776,778,R],[1281,748,750,754,768,B],
  [1298,741,749,758,764,B],[1315,756,760,785,790,B],[1331,762,771,776,806,B],[1353,762,771,786,798,B],[1370,776,779,820,821,B],[1387,763,770,812,814,R],
  [1403,761,766,787,790,B],[1420,782,786,806,810,B],[1441,803,814,820,830,B],[1458,812,818,828,834,B],[1474,825,828,834,844,B],[1491,829,831,852,865,B],
  [1508,842,849,854,867,R],[1530,827,831,854,855,R],[1547,827,829,848,850,B],[1564,843,845,879,880,B],
];
const C2 = [
  [39,886,898,903,916,B],[56,880,888,928,932,B],[73,918,928,951,957,B],[92,893,925,965,979,R],[109,914,925,940,942,B],[126,926,933,956,964,B],
  [143,921,928,951,952,R],[159,924,928,934,936,R],[180,932,937,941,951,B],[196,909,925,936,944,B],[213,898,904,928,944,R],[229,887,898,902,914,R],
  [246,885,900,905,908,R],[266,860,862,893,894,R],[283,852,860,866,873,R],[299,855,860,886,890,B],[316,864,889,896,898,R],[333,874,888,898,900,B],
  [349,866,868,893,906,R],[369,862,868,880,882,R],[386,862,863,881,890,B],[403,862,878,882,886,B],[419,874,880,888,890,R],[436,825,828,874,882,R],
  [456,791,809,836,838,R],[473,787,788,803,816,R],[489,779,785,788,806,R],[506,786,787,814,816,B],[522,810,813,848,852,B],[542,838,843,860,873,B],
  [560,862,862,895,909,B],[575,884,898,913,922,B],[593,912,915,928,932,B],[609,900,906,928,930,R],[626,905,906,940,942,B],[646,879,897,940,951,R],
  [662,884,897,913,916,R],[679,857,876,897,898,R],[695,864,868,886,887,R],[712,862,866,893,898,B],[732,890,895,905,912,B],[749,893,904,912,920,B],
  [765,906,911,948,950,B],[782,940,946,957,968,B],[798,955,957,983,984,B],[819,970,986,1014,1018,B],[836,1006,1010,1022,1042,B],[852,1010,1022,1048,1050,B],
  [868,1030,1042,1052,1054,R],[885,983,1015,1047,1056,R],[902,940,945,1022,1025,R],[922,930,950,978,980,B],[940,960,965,980,987,R],
];
const VOL1 = { 189: [76, R], 207: [44, B], 228: [48, R], 244: [12, B], 261: [24, R], 278: [12, B], 294: [38, R], 316: [9, B], 332: [12, R], 349: [10, B], 366: [9, R], 454: [12, R], 488: [7, R], 509: [6, B], 525: [12, R], 542: [7, B], 614: [7, R], 752: [6, R], 769: [7, B], 807: [6, R], 824: [7, R], 841: [6, B], 857: [10, R], 880: [7, B], 895: [7, B], 911: [6, R], 928: [6, R], 946: [6, B], 966: [7, R], 984: [6, B], 1050: [12, R], 1071: [7, B], 1210: [7, R], 1331: [6, R] };
const VOL2 = { 92: [6, R], 436: [6, R], 819: [6, R], 885: [16, R], 902: [12, B], 922: [10, B] };
const M5 = [
  "34,656 51,653 85,646 122,640 139,634 156,637 173,646 189,620 207,600 228,565 244,535 261,485 278,468 294,452 316,441 337,435 360,444 382,467 404,478 438,493 454,509 471,518 500,521 525,542 550,551 575,573 614,590 648,602 664,612 702,622 736,628 750,627 775,606 790,602 824,602 841,600 870,596 895,586 920,571 950,571 984,573 1000,581 1025,590 1040,606 1060,634 1080,656 1105,684 1130,694 1177,697 1195,706 1215,736 1235,747 1265,772 1281,778 1298,764 1350,770 1380,786 1420,788 1440,801 1458,802 1485,822 1510,838 1547,841",
  "6,842 23,848 50,874 73,903 100,927 126,941 155,936 200,939 230,926 266,898 285,884 316,880 349,882 403,881 436,872 460,855 489,821 506,806 540,818 560,850 593,888 626,914 662,915 690,900 712,888 740,887 765,900 798,938 836,985 870,1020 890,1026 925,1008 940,988",
];
const M20 = [
  "26,664 173,664 195,656 244,628 290,586 338,556 370,540 420,518 470,506 500,493 525,491 550,495 600,511 648,540 700,562 752,581 800,591 850,599 950,597 1034,594 1080,604 1110,609 1140,622 1190,634 1225,660 1281,685 1330,716 1400,746 1460,768 1520,794",
  "0,799 40,808 90,835 143,860 180,882 230,898 290,905 380,908 430,900 490,876 550,858 610,862 650,869 712,867 750,874 790,886 836,916 868,939 900,949",
];
const M60 = [
  "26,611 60,614 250,614 300,606 360,600 450,591 740,591 830,591 885,586 940,575 1000,571 1060,571 1110,574 1180,576 1250,586 1310,603 1400,632 1480,659",
  "6,677 90,708 180,736 316,772 430,803 490,820 600,844 712,860 790,872 850,886 940,906",
];

const xa = (x) => x / 2.8 - 9;
const xb = (x) => x / 2.751 + 541;
const yy = (y) => y / 2.306 - 93;
const path = ([a, b]) => {
  const conv = (s, fx) => s.split(" ").map((p) => { const [x, y] = p.split(","); return fx(+x).toFixed(1) + "," + yy(+y).toFixed(1); });
  return [...conv(a, xa), ...conv(b, xb)].join(" ");
};
const CANDLES = [...C1.map(([x, ...r]) => [xa(x), ...r, VOL1[x] || [x < 120 ? 0 : 3, r[4]]]), ...C2.map(([x, ...r]) => [xb(x), ...r, VOL2[x] || [3, r[4]]])];
const HUE = ["#1560d0", "#f02010"];
const LEVELS = [[244, "12,800"], [366, "11,520"], [487, "10,240"], [611, "8,960"], [732, "7,680"], [853, "6,400"], [974, "5,120"], [1099, "3,840"]];
const MONTHS = [[21, "2024.05"], [147, "2024.06"], [266, "2024.07"], [411, "2024.08"], [544, "2024.09"], [655, "2024.10"], [781, "2024.11"]];

function ChartDrawing() {
  return (
    <svg viewBox="0 0 1050 492" className="col-start-1 row-start-1 h-auto w-full" role="img" aria-label="파인엠텍 일봉 차트">
      <g stroke="#e2e2e2" strokeWidth="1.5">
        {LEVELS.slice(1).map(([y]) => (<path key={y} d={`M0 ${yy(y)}H965`} />))}
        {MONTHS.map(([x]) => (<path key={x} d={`M${x} 34V466`} />))}
        <path d="M175 422.6H965" />
      </g>
      <rect x="1" y="1" width="964" height="465" fill="none" stroke="#b4b4b4" strokeWidth="2" />
      <path d="M0 404.5H965" stroke="#b4b4b4" strokeWidth="1.5" />
      <g stroke="#777" strokeWidth="1.5">
        {LEVELS.map(([y]) => (<path key={y} d={`M965 ${yy(y)}h9`} />))}
        {LEVELS.flatMap(([y], i) => [1, 2, 3].map((k) => <path key={y + "-" + k} d={`M965 ${Math.min(yy(y) + k * 13.25, 398)}h4`} />))}
        {[412, 422.6, 433, 443, 454, 464].map((y, i) => (<path key={y} d={`M965 ${y}h${i === 1 || i === 5 ? 9 : 4}`} />))}
      </g>
      <path d="M1049 0V432" stroke="#ddd" strokeWidth="2" />
      <polyline points={path(M60)} fill="none" stroke="#22a045" strokeWidth="1.3" />
      {CANDLES.map(([x, h, t, b, l, c, v]) => (
        <g key={x} fill={HUE[c]}>
          <rect x={x - 0.8} y={yy(h)} width="1.6" height={(l - h) / 2.306} />
          <rect x={x - 2.2} y={yy(t)} width="4.4" height={Math.max((b - t) / 2.306, 2)} />
          {v[0] > 0 && <rect x={x - 2.2} y={463.5 - v[0] / 2.306} width="4.4" height={v[0] / 2.306} fill={HUE[v[1]]} />}
        </g>
      ))}
      <polyline points={path(M20)} fill="none" stroke="#f2b010" strokeWidth="2.3" />
      <polyline points={path(M5)} fill="none" stroke="#111" strokeWidth="1.2" />
      <path d="M0 311.5H876M0 322.5H876" stroke="#ff6a6a" strokeWidth="1.3" />
      <g fill="#45e080" fillOpacity=".85" stroke="#5a78e8" strokeWidth="1.3">
        <circle cx="876" cy="312.5" r="9" /><circle cx="876" cy="322.5" r="9" />
      </g>
      <path d="M868 311.5h14M868 322.5h14" stroke="#208040" strokeWidth="1" />
      <g fontSize="14" textAnchor="middle">
        <rect x="2" y="300" width="43" height="21" rx="10.5" fill="#fbee3c" stroke="#9a9a9a" strokeWidth="1.5" />
        <text x="24" y="315">1차</text>
        <rect x="2" y="310.5" width="43" height="21" rx="10.5" fill="#fbee3c" stroke="#9a9a9a" strokeWidth="1.5" />
        <text x="24" y="326">2차</text>
      </g>
      <g fontSize="18" fill="#333" className="font-normal">
        {LEVELS.map(([y, t]) => (<text key={t} x="980" y={yy(y) + 4} fontSize="19">{t}</text>))}
        {MONTHS.map(([x, t], i) => (<text key={t} x={i ? x : 30} y="485" textAnchor="middle">{t}</text>))}
        <rect x="0" y="412" width="175" height="16" fill="#fff" />
        <text x="26" y="425">239,630<tspan fontWeight="350">주</tspan> (27.0%)</text>
        <text x="26" y="54" fontWeight="350">단순</text>
      </g>
      <g fontSize="14" fill="#5c6c80">
        <text x="975" y="426">10,000K</text>
        <text x="975" y="468">0K</text>
      </g>
      <g fill="#e6eef4" stroke="#999"><rect x="10.5" y="45" width="7.5" height="7.5" /><rect x="10.5" y="415" width="7.5" height="7.5" /></g>
      <g fontSize="17" className="font-normal">
        <rect x="71" y="44" width="10" height="9" fill="#000" /><text x="84" y="55">5</text>
        <rect x="102" y="44" width="9" height="9" fill="#f2b010" /><text x="114" y="55" fill="#f2b010">20</text>
        <rect x="140" y="44" width="10" height="9" fill="#109a40" /><text x="153" y="55" fill="#109a40">60</text>
      </g>
    </svg>
  );
}

const WAVE = "M3 27l3-5 2-1 2 2 3 0 3-9 3 3 3 9 3 1 3-6 3-10";
const TOOLS = [
  ["차트 설정", <g key="g"><circle cx="18" cy="18" r="7.5" fill="none" stroke="#6e5210" strokeWidth="6" /><path d="M18 4v6M18 26v6M4 18h6M26 18h6M8 8l4 4M24 24l4 4M28 8l-4 4M12 24l-4 4" stroke="#6e5210" strokeWidth="5.6" /><path d="M18 5v6M18 25v6M5 18h6M25 18h6M9 9l4 4M23 23l4 4M27 9l-4 4M13 23l-4 4" stroke="#f7b531" strokeWidth="3.2" /><circle cx="18" cy="18" r="7" fill="none" stroke="#f7b531" strokeWidth="4.6" /><circle cx="18" cy="18" r="4.3" fill="#fff" stroke="#6e5210" strokeWidth="1.2" /></g>],
  ["선택", <path key="p" d="M12 4v19l4.500-4 4.500 10 3.500-1.500-4.500-9.500 6-.5z" fill="#14246c" />],
  ["십자선", <g key="c"><path d="M2 17h32M18.500 3v30" stroke="#e02020" strokeWidth="1.800" /><path d="M10 17h16M18.500 10v14" stroke="#802020" strokeWidth="1.800" /></g>],
  ["추세선", <g key="t"><path d="M4 23L32 11" stroke="#1c2c7c" strokeWidth="1.800" /><path d="M2.500 21.500h4v4h-4zM30 9h4v4h-4z" fill="#e03030" /></g>],
  ["원", <g key="o"><circle cx="18.500" cy="17" r="7.500" fill="none" stroke="#1c2c7c" strokeWidth="1.800" strokeDasharray="3 1.500" /><path d="M17 8h3v2h-3zM17 24h3v2h-3zM9.500 15.500h2v3h-2zM26 15.500h2v3h-2z" fill="#e03030" /></g>],
  ["사각형", <g key="r"><path d="M9 10.500h19v15H9z" fill="none" stroke="#1c2c7c" strokeWidth="1.800" /><path d="M17 9h3v2h-3zM17 25h3v2h-3zM8 16.500h2v3H8zM27 16.500h2v3h-2z" fill="#e03030" /></g>],
  ["수평선", <g key="h"><path d="M4 15h28" stroke="#1c2c7c" strokeWidth="2" /><path d="M3 13h3.500v4H3zM30.500 13H34v4h-3.500z" fill="#e03030" /></g>],
  ["수직선", <g key="v"><path d="M18.500 4v27" stroke="#1c2c7c" strokeWidth="2" /><path d="M16.500 3h4v3.500h-4zM16.500 29.500h4V33h-4z" fill="#e03030" /></g>],
  ["지우개", <path key="e" d="M13 15l9-10h7l4 4-1 4-8 8h-7l-4-3z" fill="#fbf6e6" stroke="#222" strokeWidth="1.500" />],
  ["모두 지우기", <g key="a"><path d="M13 15l9-10h7l4 4-1 4-8 8h-7l-4-3z" fill="#fbf6e6" stroke="#222" strokeWidth="1.500" /><text x="5" y="33" fontSize="12" fontWeight="bold" fill="#a01818">ALL</text></g>],
];

function ChartInfo() {
  const badge = "flex h-[21px] w-6 items-center justify-center rounded-[3px] border-2 border-[#b0b8bc] bg-[#e2e8ec] text-[16px] leading-none font-bold text-[#333]";
  return (
    <div className="col-start-1 row-start-1 flex h-[35px] w-[91.9%] items-center self-start border-2 border-[#b4b4b4] bg-white pl-[9px] font-normal whitespace-nowrap">
      <span className="w-[117px] font-[350] text-[#222]">현재가 :</span>
      <b className="pr-1 text-[20px] text-[#ff0000]">5,260</b><span className="pr-[46px] text-[17px] font-[350]">원</span>
      <svg viewBox="0 0 14 12" className="mr-[7px] h-3 w-3.5"><path d="M7 0l7 12H0z" fill="#ff0000" /></svg>
      <span className="pr-[31px] text-[#ff0000]">100</span>
      <span className="pr-[36px] text-[#ff0000]">1.94%</span>
      <span className="mr-[9px] rounded-[3px] bg-[#b2b2b2] px-[3px] text-[17px] leading-5 font-[350] text-white">거래량</span>
      <span className="pr-[56px]">239,630</span>
      <span className={badge}>시</span><span className="pr-[21px] pl-[14px] text-[#108010]">5,100</span>
      <span className={badge}>고</span><span className="pr-[20px] pl-[14px] text-[#108010]">5,350</span>
      <span className={badge}>저</span><span className="pl-[14px] text-[#108010]">5,000</span>
    </div>
  );
}

function ChartWindow() {
  const PB = "h-[32px] w-[56px] border-2 border-t-[#ccc] border-l-[#ccc] border-r-[#999] border-b-[#999] bg-[#f1f1f1]";
  const NAV = "flex h-[22px] w-[23px] items-center justify-center rounded-[5px] border border-[#bbb] bg-white";
  return (
    <Win code="3004" name="종합차트">
      <div className="flex flex-1 flex-col px-[5px] pt-[6px] pb-[6px]">
        <div className="flex items-center">
          <SymbolBox box="w-[43.2%]" />
          <div className="ml-[7px] flex gap-1">
            <button className="h-[32px] w-[56px] border-2 border-[#4a5ec0] bg-[#e0e6ff] text-[#3c50b0]">일봉</button>
            <button className={PB}>주봉</button>
            <button className={PB}>월봉</button>
          </div>
          <div className="ml-[23px] flex gap-[18px]">
            <BoxCheck label="매수라인" />
            <BoxCheck label="포인트" />
            <BoxCheck label="차수" />
          </div>
        </div>
        <div className="mt-[6px] flex items-start">
          <div className="grid min-w-0 flex-1 grid-cols-1">
            <ChartDrawing />
            <ChartInfo />
          </div>
          <div className="flex w-[49px] flex-col gap-[6px] pt-px pl-[13px]">
            {TOOLS.map(([t, d], i) => (
              <button key={t} aria-label={t} className={"size-9 border-2 bg-[#f2f2f2] " + (i === 2 ? "border-[#1010f0]" : "border-[#a4a4a4]")}>
                <svg viewBox="0 0 36 36" className="size-8">
                  {i > 0 && <path d={WAVE} fill="none" stroke="#b4b4b4" strokeWidth="1.5" />}
                  {d}
                </svg>
              </button>
            ))}
          </div>
        </div>
        <div className="mt-auto flex items-center">
          <div className="flex h-[29px] w-[475px] items-center border-2 border-[#ccc] bg-[#efefef]"><span className="ml-[334px] h-[3px] w-[113px] bg-[#8c8c8c]" /></div>
          <div className="ml-[8px] flex gap-1">
            <button aria-label="뒤로" className={NAV}><svg viewBox="0 0 14 10" className="h-2.5 w-3.5"><path d="M7 0v10L0 5zM14 0v10L7 5z" /></svg></button>
            <button aria-label="정지" className={NAV}><span className="size-[10px] bg-black" /></button>
            <button aria-label="앞으로" className={NAV}><svg viewBox="0 0 14 10" className="h-2.5 w-3.5"><path d="M0 0v10l7-5zM7 0v10l7-5z" /></svg></button>
          </div>
          <div className="mx-[11px] grid w-[190px] grid-cols-1">
            <input type="range" aria-label="봉 개수" min="0" max="100" defaultValue="28" className="peer col-start-1 row-start-1 h-7 opacity-0" />
            <svg viewBox="0 0 190 32" className="pointer-events-none col-start-1 row-start-1 h-8 w-[190px]">
              <rect x="0" y="10" width="190" height="7" fill="#c4c4c4" stroke="#a4a4a4" />
              <path d="M48 2h18v15l-9 9-9-9z" fill="#a8a8a8" /><path d="M66 2v15l-9 9" fill="none" stroke="#333" strokeWidth="1.5" />
              <path d="M9 30h175" stroke="#333" strokeWidth="2.5" strokeDasharray="2 4.6" />
            </svg>
          </div>
          <span className="text-[18px] font-normal text-[#666]">140</span>
          <button aria-label="축소" className="ml-[12px] flex h-[24px] w-[25px] items-center justify-center border-2 border-[#b0b8c4] bg-[#f2f2f2]"><span className="h-[3px] w-3 bg-[#334]" /></button>
          <button aria-label="확대" className="ml-[3px] flex h-[24px] w-[25px] items-center justify-center border-2 border-[#b0b8c4] bg-[#f2f2f2]"><svg viewBox="0 0 12 12" className="size-3"><path d="M6 0v12M0 6h12" stroke="#334" strokeWidth="3" /></svg></button>
          <button aria-label="차트 갱신" className="ml-[17px]">
            <svg viewBox="0 0 26 24" className="h-6 w-[26px]">
              <path d="M16 13l7 8" stroke="#c9a878" strokeWidth="4" /><circle cx="12" cy="8" r="6.5" fill="#e4f2fa" stroke="#6a9ab8" strokeWidth="2" />
              <path d="M2 16a6 6 0 0 1 9-3l1-2 2 5h-5l1-1.500a4 4 0 0 0-5 2zM14 18a6 6 0 0 1-9 3l-2 2-1-6 5 1-1 1.500a4 4 0 0 0 5-1.500z" fill="#1a1f8c" />
            </svg>
          </button>
          <button aria-label="차트 저장" className="ml-[8px]">
            <svg viewBox="0 0 22 22" className="size-[22px]">
              <path d="M1 1h18l2 2v18H1z" fill="#3f7896" stroke="#2a5068" /><rect x="5" y="2" width="12" height="8" fill="#bfe4f4" /><rect x="5" y="13" width="12" height="8" fill="#dfe8ec" /><rect x="7" y="14" width="3" height="6" fill="#234" />
            </svg>
          </button>
          <input aria-label="표시 봉수" defaultValue="140" className="ml-auto h-[27px] w-[51px] rounded-[4px] border-2 border-[#c0c0c0] bg-[#f6f6f6] pr-2 text-right font-normal text-[#444]" />
          <span className="px-[7px]">/</span>
          <input aria-label="전체 봉수" defaultValue="524" className="mr-[26px] h-[27px] w-[51px] rounded-[4px] border-2 border-[#c0c0c0] bg-[#f6f6f6] pr-2 text-right font-normal text-[#444]" />
        </div>
      </div>
    </Win>
  );
}

/* ---------- bottom bar ---------- */

function IndexBox({ name, price, diff, rate, vol }) {
  return (
    <div className="flex h-[30px] w-[478px] items-center border-2 border-[#9aa0a8] bg-white font-normal text-[#d80000]">
      <span className="w-[80px] pl-2 font-['Liberation_Sans'] text-[18px] text-[#222]">{name}</span>
      <span className="w-[88px] text-right">{price}</span>
      <svg viewBox="0 0 14 12" className="mr-[6px] ml-[22px] h-3 w-3.5"><path d="M7 0l7 12H0z" fill="#d80000" /></svg>
      <span className="w-[41px] text-right">{diff}</span>
      <span className="w-[61px] text-right">{rate}</span>
      <span className="w-[91px] text-right text-[#111]">{vol}</span>
      <button aria-label={name + " 선택"} className="ml-auto flex h-full w-[22px] items-center justify-center border-l-2 border-[#9aa0a8] bg-[#ccc]"><svg viewBox="0 0 8 5" className="h-[5px] w-2"><path d="M0 0h8L4 5z" fill="#777" /></svg></button>
    </div>
  );
}

function BottomBar() {
  return (
    <footer className="flex h-[49px] items-center justify-between bg-[#d5d8dd] pr-[27px] pl-[7px] whitespace-nowrap">
      <div className="flex items-center">
        <div className="mr-2 flex h-[30px] w-[178px] items-center justify-end gap-4 border-2 border-[#777] bg-[#646464] pr-[10px] text-[#e4e4e4]"><span>님</span><span className="text-[#d8d890]">:</span></div>
        <IndexBox name="KOSPI" price="2,534.34" diff="33.10" rate="1.32%" vol="564,692" />
        <span className="w-[9px]" />
        <IndexBox name="KOSDAQ" price="696.83" diff="19.82" rate="2.93%" vol="784,507" />
      </div>
      <div className="flex items-center">
        <Check label="자동감시(0)" />
        <button className="ml-[18px] flex items-center gap-2"><svg viewBox="0 0 17 16" className="h-4 w-[17px]"><path d="M7 0l10 8-10 8z" fill="#999" /><path d="M0 4h2v2H0zM3 4h2v2H3zM0 7h2v2H0zM3 7h2v2H3zM0 10h2v2H0zM3 10h2v2H3z" fill="#aaa" /></svg>설정</button>
        <span className="mx-[26px] text-[#555]">|</span>
        <Check checked label="자동매매" />
        <button className="ml-[17px] h-[27px] w-[78px] rounded-full bg-[#acacac] text-[16px] text-white">장개시전</button>
        <button className="ml-[19px] flex items-center gap-[8px]"><svg viewBox="0 0 20 18" className="h-[18px] w-5"><path d="M0 5h4l7-5v18l-7-5H0z" fill="#0a84f0" /><path d="M13 4h2v2h-2zM13 8h2v2h-2zM13 12h2v2h-2zM16 4h2v2h-2zM16 8h2v2h-2zM16 12h2v2h-2z" fill="#5ab0f8" /></svg>자동매매 로그 보기</button>
        <span className="mx-[27px] text-[#555]">|</span>
        <button className="flex items-center gap-2 text-[#333]"><FaCog className="size-[18px] text-[#555]" />체결</button>
      </div>
    </footer>
  );
}

export default function App() {
  return (
    <div className="flex min-h-screen flex-col border-x-[3px] border-t-[3px] border-b-4 border-[#303134] bg-[#6a6a6a] font-['Roboto_Condensed','Noto_Sans_CJK_KR',sans-serif] text-[19px] leading-[24px] font-[350] text-[#111]">
      <TopHeader />
      <Toolbar />
      <PageTabs />
      <main className="flex flex-1 flex-col gap-0.5 border-t-2 border-r-[3px] border-b-2 border-l-[4px] border-t-[#a4a4a4] border-r-[#c8c8c8] border-b-[#b0b0b0] border-l-[#8a8a8a] bg-[#666] pt-[3px] pb-0.5 pl-0.5">
        <div className="grid flex-1 grid-cols-[1603fr_1078fr] gap-1">
          <BalanceWindow />
          <HistoryWindow />
        </div>
        <div className="grid grid-cols-[567fr_1002fr_1109fr] gap-[3px]">
          <OpenOrdersWindow />
          <OrderWindow />
          <ChartWindow />
        </div>
      </main>
      <BottomBar />
    </div>
  );
}
